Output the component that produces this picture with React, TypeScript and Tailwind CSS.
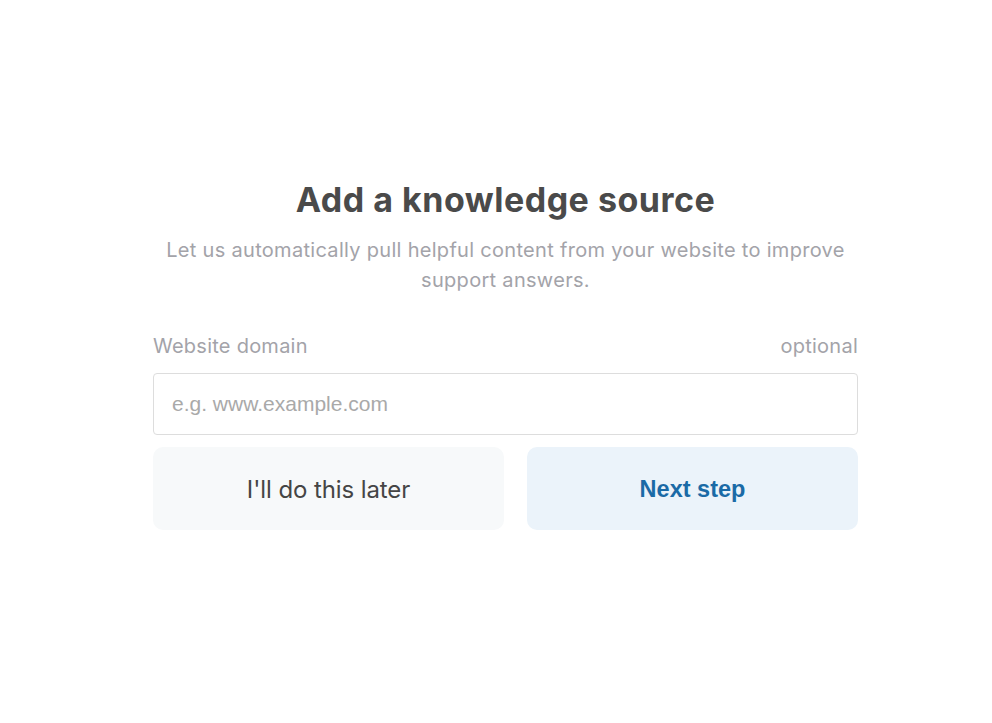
export default function App() {
  return (
    <div className="min-h-[723px] bg-white flex justify-center pl-[19px] font-['Inter','Noto_Sans',sans-serif]">
      <div className="w-[705px] pt-[178px] flex flex-col">
        <h1 className="text-center text-[34px] leading-[44px] font-bold text-[#4a4a4a] tracking-[0.5px]">
          Add a knowledge source
        </h1>
        <p className="mt-[13px] text-center text-[20px] leading-[30px] text-[#a3a3a9] tracking-[0.3px]">
          Let us automatically pull helpful content from your website to improve
          <br />
          support answers.
        </p>
        <div className="mt-[39px] flex justify-between text-[20px] leading-[24px] text-[#a3a3a9] tracking-[0.25px]">
          <span>Website domain</span>
          <span>optional</span>
        </div>
        <input
          type="text"
          placeholder="e.g. www.example.com"
          className="mt-[15px] h-[62px] w-full rounded-[4px] border border-[#dddddd] px-[18px] text-[21px] font-['Liberation_Sans',Arial,sans-serif] text-[#444] placeholder:text-[#a9a9a9] outline-none"
        />
        <div className="mt-[12px] flex gap-[23px]">
          <button className="w-[351px] h-[83px] pt-[2px] rounded-[10px] bg-[#f7f9fa] text-[24px] text-[#454545] tracking-[-0.1px]">
            I'll do this later
          </button>
          <button className="flex-1 h-[83px] pt-[2px] rounded-[10px] bg-[#ebf3fa] text-[23.5px] font-bold text-[#1a6aa6] font-['Liberation_Sans',Arial,sans-serif]">
            Next step
          </button>
        </div>
      </div>
    </div>
  )
}
